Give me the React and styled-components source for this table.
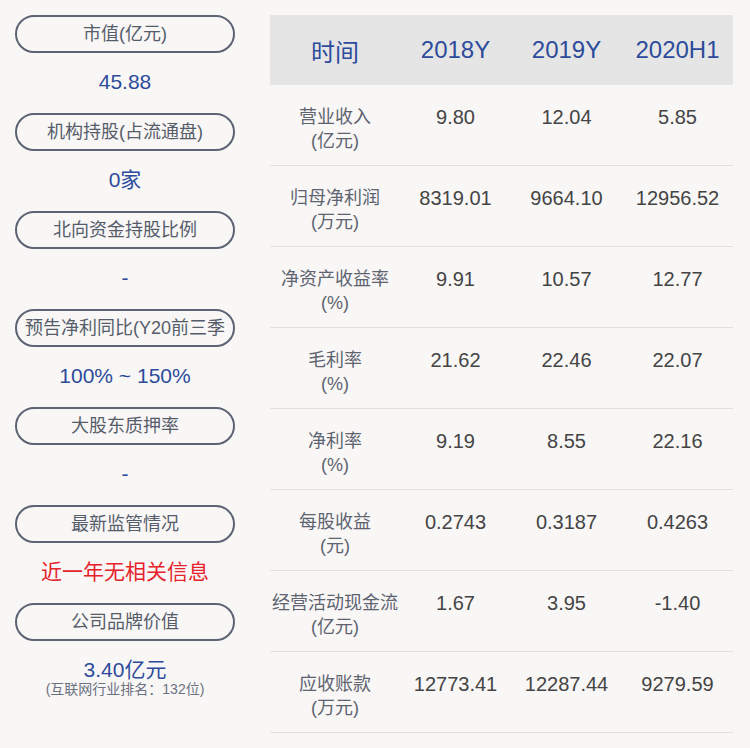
import React from "react";
import styled, { createGlobalStyle } from "styled-components";

const Global = createGlobalStyle`
  html, body { margin: 0; padding: 0; background: #f9f6f6; }
  body { font-family: "Liberation Sans", "Noto Sans CJK SC", sans-serif; }
`;

const Page = styled.div`
  display: flex;
  gap: 35px;
  padding: 15px;
  width: 750px;
  height: 748px;
  box-sizing: border-box;
  background: #f9f6f6;
`;

const LeftCol = styled.div`
  width: 220px;
  display: flex;
  flex-direction: column;
`;

const Pill = styled.div`
  height: 38px;
  box-sizing: border-box;
  border: 2px solid #5c6474;
  border-radius: 19px;
  padding: 0 6px;
  font-size: 18px;
  line-height: 34px;
  color: #555d6a;
  text-align: center;
  white-space: nowrap;
  overflow: hidden;
`;

const ValueBlock = styled.div`
  height: ${(p) => (p.$auto ? "auto" : "60px")};
  box-sizing: border-box;
  padding-top: 17px;
  text-align: center;
`;

const Value = styled.div`
  font-size: 21px;
  line-height: 24px;
  color: ${(p) => (p.$red ? "#e5232a" : "#2d4b9b")};
`;

const SubValue = styled.div`
  font-size: 14px;
  line-height: 14px;
  color: #6b7280;
`;

const Table = styled.div`
  width: 463px;
  display: flex;
  flex-direction: column;
`;

const Row = styled.div`
  display: grid;
  grid-template-columns: 130px repeat(3, 111px);
  ${(p) =>
    p.$header
      ? `height: 70px; background: #e5e5e5; align-items: center;`
      : `height: 81px; box-sizing: border-box; border-bottom: 1px solid #e3e0e0; padding-top: 20px; align-items: start;`}
`;

const HeadCell = styled.div`
  text-align: center;
  font-size: 24px;
  color: #2d4b9b;
  white-space: nowrap;
`;

const Label = styled.div`
  text-align: center;
  font-size: 18px;
  line-height: 24px;
  color: #5d6470;
  white-space: nowrap;
`;

const Cell = styled.div`
  text-align: center;
  font-size: 20px;
  line-height: 24px;
  color: #444444;
  white-space: nowrap;
`;

const leftItems = [
  { title: "市值(亿元)", value: "45.88" },
  { title: "机构持股(占流通盘)", value: "0家" },
  { title: "北向资金持股比例", value: "-" },
  { title: "预告净利同比(Y20前三季", value: "100% ~ 150%" },
  { title: "大股东质押率", value: "-" },
  { title: "最新监管情况", value: "近一年无相关信息", red: true },
  { title: "公司品牌价值", value: "3.40亿元", sub: "(互联网行业排名：132位)" },
];

const rows = [
  { l1: "营业收入", l2: "(亿元)", v: ["9.80", "12.04", "5.85"] },
  { l1: "归母净利润", l2: "(万元)", v: ["8319.01", "9664.10", "12956.52"] },
  { l1: "净资产收益率", l2: "(%)", v: ["9.91", "10.57", "12.77"] },
  { l1: "毛利率", l2: "(%)", v: ["21.62", "22.46", "22.07"] },
  { l1: "净利率", l2: "(%)", v: ["9.19", "8.55", "22.16"] },
  { l1: "每股收益", l2: "(元)", v: ["0.2743", "0.3187", "0.4263"] },
  { l1: "经营活动现金流", l2: "(亿元)", v: ["1.67", "3.95", "-1.40"] },
  { l1: "应收账款", l2: "(万元)", v: ["12773.41", "12287.44", "9279.59"] },
];

export default function App() {
  return (
    <>
      <Global />
      <Page>
        <LeftCol>
          {leftItems.map((it) => (
            <React.Fragment key={it.title}>
              <Pill>{it.title}</Pill>
              <ValueBlock $auto={!!it.sub}>
                <Value $red={it.red}>{it.value}</Value>
                {it.sub && <SubValue>{it.sub}</SubValue>}
              </ValueBlock>
            </React.Fragment>
          ))}
        </LeftCol>
        <Table>
          <Row $header>
            <HeadCell>时间</HeadCell>
            <HeadCell>2018Y</HeadCell>
            <HeadCell>2019Y</HeadCell>
            <HeadCell>2020H1</HeadCell>
          </Row>
          {rows.map((r) => (
            <Row key={r.l1}>
              <Label>
                {r.l1}
                <br />
                {r.l2}
              </Label>
              {r.v.map((x, i) => (
                <Cell key={i}>{x}</Cell>
              ))}
            </Row>
          ))}
        </Table>
      </Page>
    </>
  );
}
